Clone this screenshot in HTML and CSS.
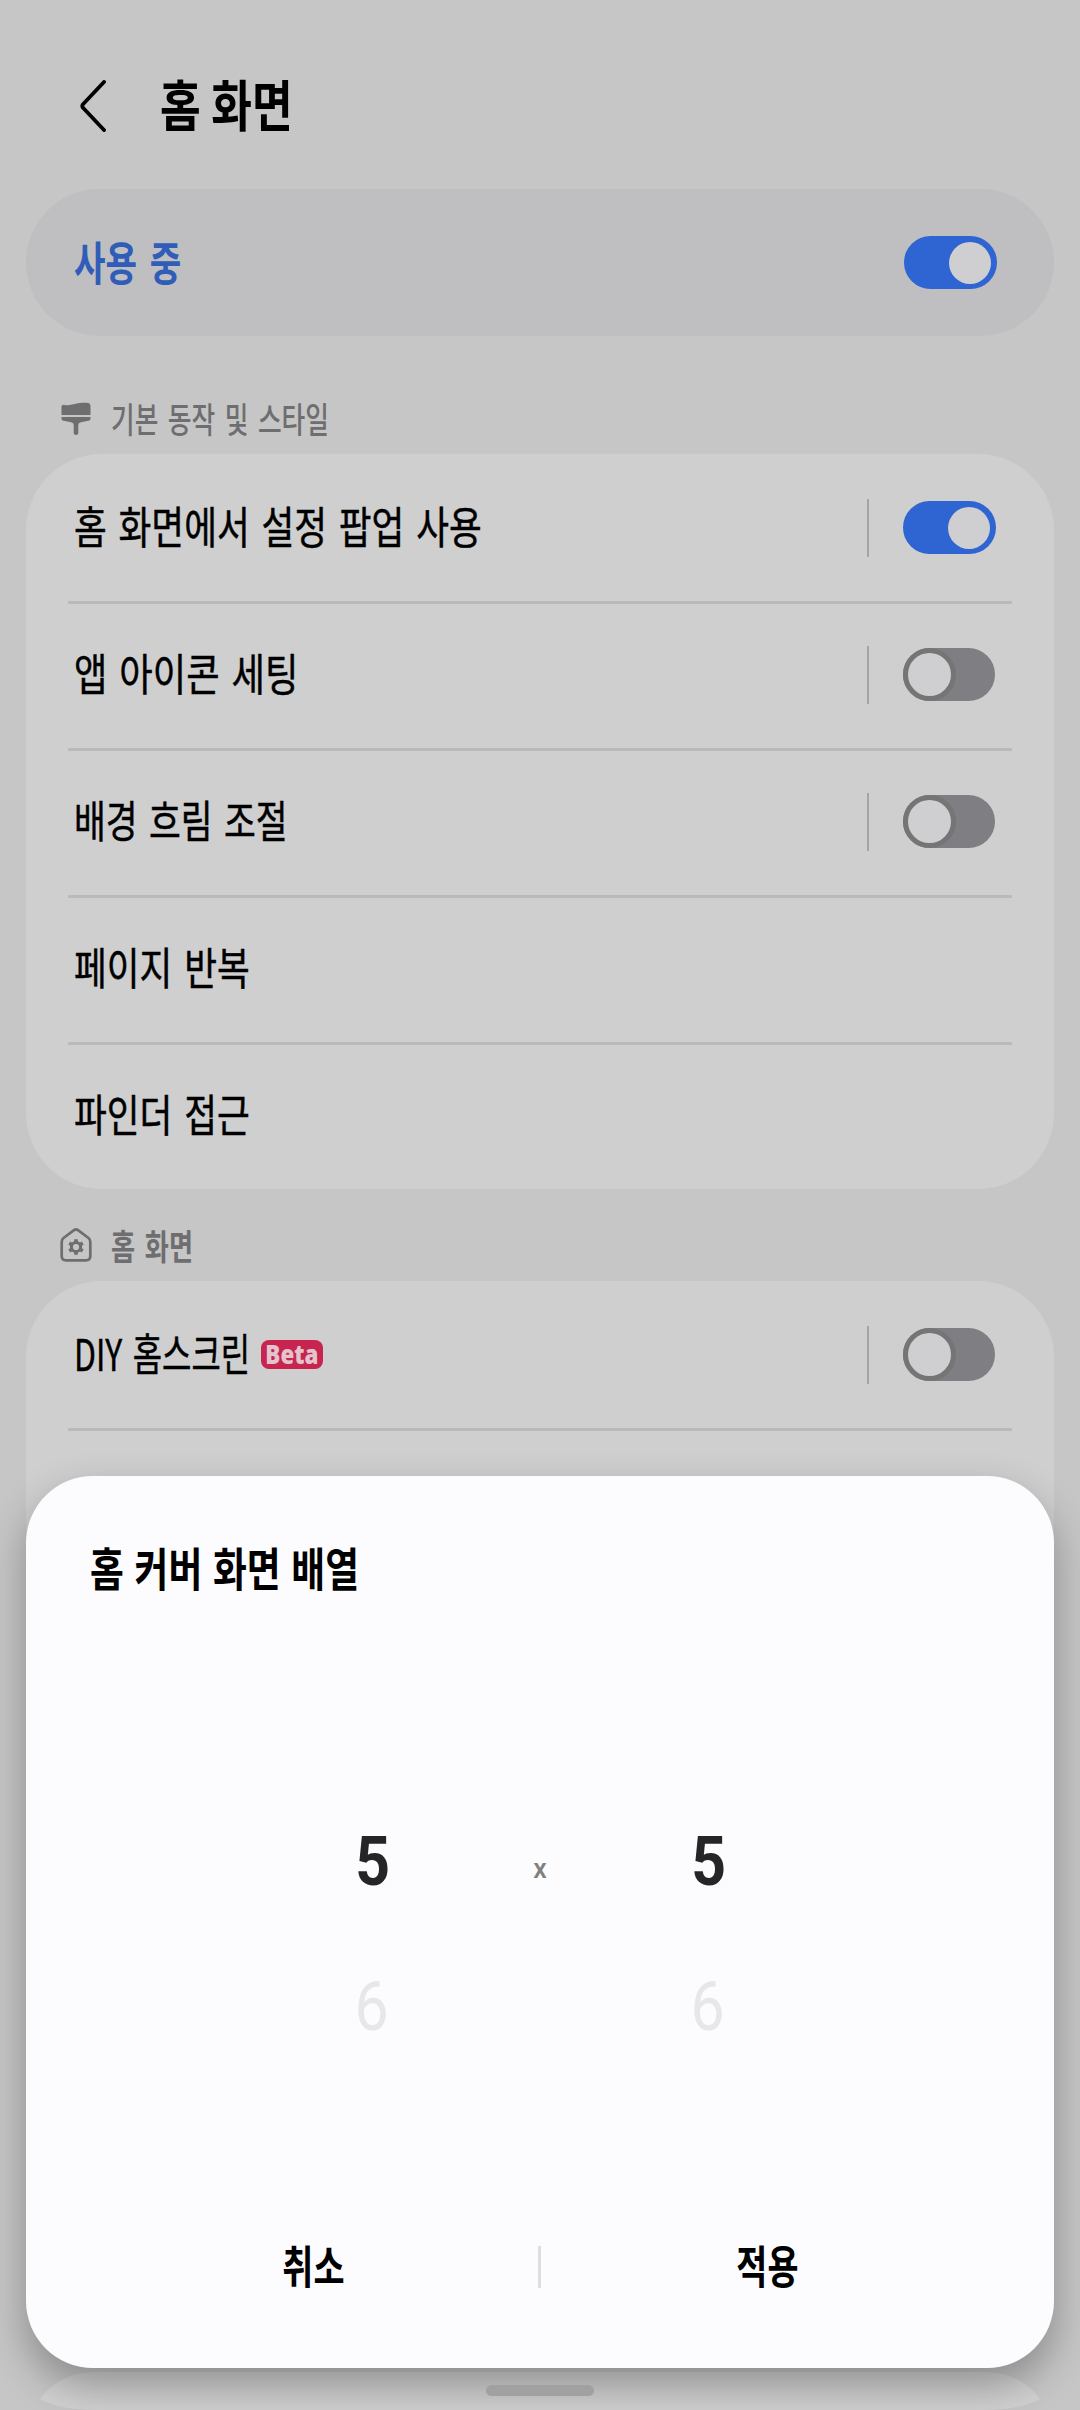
FILE: index.html
```html
<!DOCTYPE html>
<html lang="ko">
<head>
<meta charset="utf-8">
<title>홈 화면</title>
<link rel="stylesheet" href="styles.css">
</head>
<body>
<div class="screen">
  <header class="topbar">
    <svg class="back" width="26" height="52" viewBox="0 0 26 52" fill="none" stroke="#000" stroke-width="3.8" stroke-linecap="round" stroke-linejoin="round"><path d="M24 2 3 24.200Q1.600 26 3 27.800L24 50"/></svg>
    <h1 class="txt title">홈 화면</h1>
  </header>

  <div class="master">
    <span class="txt master-label">사용 중</span>
    <span class="switch on"><i class="knob"></i></span>
  </div>

  <div class="section first">
    <svg class="section-icon" width="32" height="34" viewBox="0 0 32 34" fill="#6e6e70"><path d="M1.500 4.500Q1.500 2.500 4 2.700C10 4.500 15 1 22 .8H27Q30.500 1 30.500 4.500V13H1.500Z"/><path d="M1.500 15H30.500V16.500Q30.500 18.500 27 19L20 20.500Q18.300 21 18.300 23V31Q18.300 33 16 33T13.700 31V23Q13.700 21 12 20.500L5 19Q1.500 18.500 1.500 16.500Z"/></svg>
    <h2 class="txt section-title">기본 동작 및 스타일</h2>
  </div>
  <ul class="card">
    <li class="row"><span class="txt label">홈 화면에서 설정 팝업 사용</span><span class="bar"></span><span class="switch on"><i class="knob"></i></span></li>
    <li class="row"><span class="txt label icons">앱 아이콘 세팅</span><span class="bar"></span><span class="switch off"><i class="knob"></i></span></li>
    <li class="row"><span class="txt label blur">배경 흐림 조절</span><span class="bar"></span><span class="switch off"><i class="knob"></i></span></li>
    <li class="row"><span class="txt label">페이지 반복</span></li>
    <li class="row"><span class="txt label">파인더 접근</span></li>
  </ul>

  <div class="section second">
    <svg class="section-icon" width="32" height="34" viewBox="0 0 32 34" fill="none" stroke="#6e6e70" stroke-width="2.700" stroke-linejoin="round"><path d="M1.700 14Q1.700 11.500 3.500 10L14 2.200Q16 .8 18 2.200L28.500 10Q30.300 11.500 30.300 14V28Q30.300 32.300 26 32.300H6Q1.700 32.300 1.700 28Z"/><circle cx="16" cy="19" r="4.600" stroke-width="3"/><path stroke-width="3.600" d="M16 11.200V14M16 24V26.800M9.250 15.100 11.700 16.500M20.300 21.500 22.750 22.900M9.250 22.900 11.700 21.500M20.300 16.500 22.750 15.100"/></svg>
    <h2 class="txt section-title bold">홈 화면</h2>
  </div>
  <ul class="card">
    <li class="row"><span class="txt label diy">DIY 홈스크린</span><span class="badge"><b>Beta</b></span><span class="bar"></span><span class="switch off"><i class="knob"></i></span></li>
    <li class="row tall"><span class="txt label">홈</span></li>
  </ul>

  <svg class="dock" width="1000" height="38" viewBox="0 0 1000 38"><path d="M0 27Q20 0 56 0H944Q980 0 1000 27Q980 38 944 38H56Q20 38 0 27Z" fill="#d1d1d1"/></svg>
  <section class="sheet">
    <h2 class="txt sheet-title">홈 커버 화면 배열</h2>
    <div class="picker">
      <div class="wheel"><span class="num current">5</span><span class="num next">6</span></div>
      <span class="times">x</span>
      <div class="wheel"><span class="num current">5</span><span class="num next">6</span></div>
    </div>
    <div class="actions">
      <button><span class="txt">취소</span></button>
      <span class="split"></span>
      <button><span class="txt">적용</span></button>
    </div>
  </section>
  <div class="handle"></div>
</div>
</body>
</html>
```

FILE: styles.css
```css
* { box-sizing: border-box; margin: 0; padding: 0; }
body { background: #c6c6c6; font-family: "Noto Sans CJK KR", "Noto Sans", sans-serif; color: #000; }
.screen { position: relative; width: 1080px; height: 2410px; padding: 0 26px; overflow: hidden; }

/* Korean labels are condensed horizontally */
.txt { display: inline-block; white-space: nowrap; line-height: 1; transform: scaleX(.77); transform-origin: 0 50%; word-spacing: .09em; padding-bottom: 6px; }

.topbar { display: flex; align-items: center; height: 189px; padding: 23px 0 0 54px; }
.title { font-size: 55px; font-weight: 700; margin-left: 54px; padding-bottom: 8px; word-spacing: -.04em; transform: scaleX(.805); }

.master { display: flex; align-items: center; justify-content: space-between; height: 147px; border-radius: 74px; background: #bfbfc1; padding: 0 57px 0 48px; }
.master-label { font-size: 46px; font-weight: 700; color: #2f5db8; transform: scaleX(.745); }

.switch { display: flex; align-items: center; flex: none; width: 93px; height: 53px; border-radius: 27px; }
.knob { width: 42px; height: 42px; border-radius: 50%; background: #cfcfd1; }
.on { background: #2e65d2; justify-content: flex-end; padding: 0 6px; }
.off { background: #7f7e83; width: 92px; margin-right: 1px; }
.off .knob { width: 53px; height: 53px; border: 5.500px solid #757575; }

.section { display: flex; align-items: center; padding-left: 34px; }
.first { height: 118px; padding-top: 47px; }
.second { height: 92px; padding-top: 20px; }
.section-icon { flex: none; width: 32px; height: 34px; }
.section-title { margin-left: 19px; padding-bottom: 2px; font-size: 35px; font-weight: 500; color: #6e6e70; transform: scaleX(.735); }
.bold { font-weight: 700; transform: scaleX(.75); }

.card { list-style: none; background: #cfcfcf; border-radius: 76px; padding: 0 42px; }
.row { display: flex; align-items: center; height: 147px; padding: 0 16px 0 6px; }
.row + .row { box-shadow: inset 0 3px #bababb; }
.label { font-size: 44px; transform: scaleX(.81); word-spacing: .05em; -webkit-text-stroke: .5px #000; }
.icons { transform: scaleX(.825); }
.blur { transform: scaleX(.785); }
.diy { transform: scaleX(.725); }
.bar { width: 2px; height: 58px; margin: 0 34px 0 auto; background: #a5a5a5; }
.tall { height: 700px; align-items: flex-start; padding-top: 46px; }
.badge { display: flex; align-items: center; justify-content: center; width: 62px; height: 29px; border-radius: 8px; background: #c7254f; color: #e3c3cc; margin: 0 0 1px -56px; font: 700 26px/29px "Noto Sans", sans-serif; }
.badge b { transform: scaleX(.86); }

.dock { position: absolute; left: 40px; top: 2372px; }
.sheet { position: absolute; left: 26px; top: 1476px; width: 1028px; height: 892px; border-radius: 67px; background: #fcfcfe; box-shadow: 0 18px 40px rgba(0, 0, 0, .3); display: flex; flex-direction: column; }
.sheet-title { margin: 67px 0 0 64px; font-size: 46px; font-weight: 700; align-self: flex-start; word-spacing: .01em; transform: scaleX(.8); }
.picker { display: flex; justify-content: center; margin-top: 194px; height: 240px; font-family: Roboto, sans-serif; }
.wheel { width: 100px; display: flex; flex-direction: column; align-items: center; }
.num { font-size: 69px; line-height: 145px; transform: scaleX(.88); }
.current { font-weight: 700; color: #252527; padding-left: 2px; }
.next { color: #e7e7e8; padding-right: 2px; }
.times { width: 236px; text-align: center; font: 500 27px/160px Roboto, sans-serif; color: #808080; }
.actions { display: flex; align-items: center; margin: auto 0 60px; height: 82px; padding: 0 62px; }
.actions button { flex: 1; border: 0; background: none; font: 700 45px/1 "Noto Sans CJK KR", sans-serif; color: #000; }
.actions .txt { transform: scaleX(.75); transform-origin: 50% 50%; }
.split { width: 3px; height: 42px; margin-right: 1px; background: #dedee0; }
.handle { position: absolute; left: 486px; top: 2385px; width: 108px; height: 11px; border-radius: 6px; background: #a1a1a1; }
```
